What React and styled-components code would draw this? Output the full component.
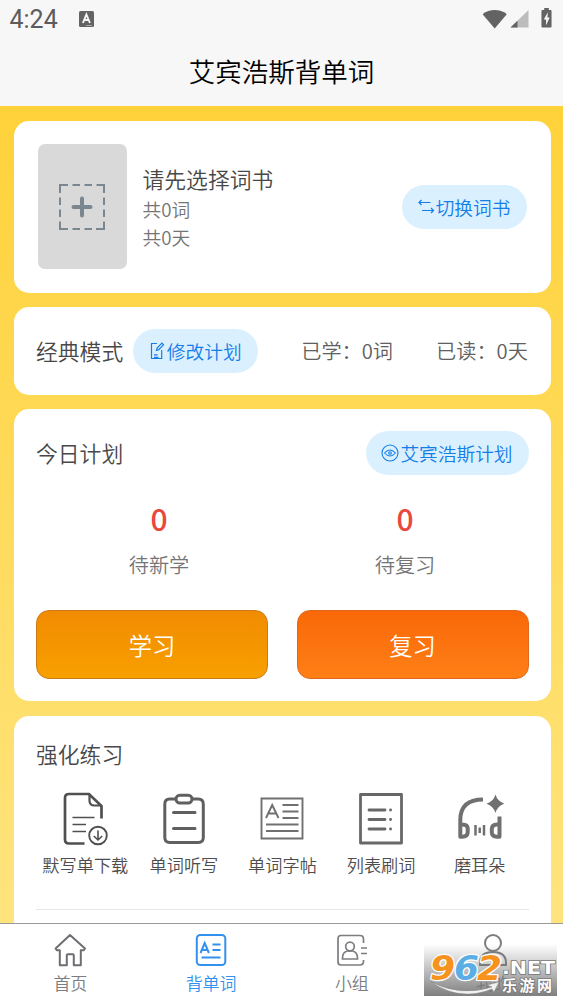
import React from "react";
import styled, { createGlobalStyle } from "styled-components";

const Global = createGlobalStyle`
  * { box-sizing: border-box; }
  body {
    margin: 0;
    font-family: "Noto Sans CJK SC", "Noto Sans", sans-serif;
    font-weight: 350;
    color: #484848;
    overflow: hidden;
  }
  svg { display: block; flex: none; }
`;

const Screen = styled.div`
  width: 563px;
  height: 1002px;
  display: flex;
  flex-direction: column;
  background: #fff;
  overflow: hidden;
`;

const Header = styled.header`
  height: 106px;
  flex: none;
  background: #f7f7f7;
`;

const StatusBar = styled.div`
  height: 38px;
  padding: 0 11px 0 9.5px;
  display: flex;
  align-items: center;
  justify-content: space-between;
`;

const StatusGroup = styled.div`
  display: flex;
  align-items: center;
  gap: ${(p) => p.$gap}px;
`;

const Clock = styled.span`
  padding-top: 2px;
  font: 400 25px/38px Roboto, sans-serif;
  color: #5c5c5c;
`;

const Title = styled.h1`
  margin: 0;
  font-size: 26.5px;
  font-weight: 350;
  line-height: 66px;
  text-align: center;
  color: #000;
`;

const Content = styled.main`
  flex: none;
  height: 817px;
  padding: 15px 12.5px 0 14px;
  display: flex;
  flex-direction: column;
  gap: 14.5px;
  overflow: hidden;
  background: linear-gradient(#ffd23a, #ffe47e);
`;

const Card = styled.section`
  flex: none;
  height: ${(p) => p.$height}px;
  padding: ${(p) => p.$padding || "22px"};
  border-radius: 15px;
  background: #fff;
`;

const Row = styled.div`
  display: flex;
  align-items: center;
  justify-content: space-between;
`;

const BookRow = styled.div`
  display: flex;
  align-items: center;
`;

const Cover = styled.div`
  width: 89.5px;
  height: 125px;
  display: flex;
  align-items: center;
  justify-content: center;
  border-radius: 7px;
  background: #d9d9d9;
`;

const BookInfo = styled.div`
  flex: 1;
  margin-left: 15.5px;
  padding-top: 1px;
`;

const Heading = styled.div`
  font-size: 21.8px;
  line-height: 32px;
  color: #484848;
`;

const Meta = styled.div`
  font-size: 18.7px;
  line-height: 28px;
  color: #757575;
`;

const Pill = styled.button`
  height: 44px;
  width: ${(p) => p.$width}px;
  padding: 0;
  display: flex;
  align-items: center;
  justify-content: center;
  gap: 1px;
  border: 0;
  border-radius: 22px;
  background: #dbf0fe;
  color: #147ee8;
  font: inherit;
  font-size: 18.7px;
  line-height: 44px;
`;

const ModeRow = styled.div`
  display: flex;
  align-items: center;
`;

const PlanSlot = styled.div`
  margin-left: 10px;
`;

const Stat = styled.span`
  margin-left: ${(p) => p.$left}px;
  font-size: 20.2px;
  line-height: 44px;
  white-space: nowrap;
  color: #606060;
`;

const Counters = styled.div`
  display: grid;
  grid-template-columns: 246px 246px;
`;

const Counter = styled.div`
  display: flex;
  flex-direction: column;
  align-items: center;
  padding: 20px 0 23px;
`;

const Count = styled.strong`
  font-size: 30px;
  font-weight: 500;
  line-height: 46px;
  margin-bottom: 2px;
  color: #e9483d;
`;

const CountLabel = styled.span`
  font-size: 20.2px;
  line-height: 44px;
  color: #757575;
`;

const Columns = styled.div`
  display: grid;
  grid-template-columns: 232px 232px;
  justify-content: space-between;
`;

const Action = styled.button`
  height: 69px;
  border: 1px solid ${(p) => p.$edge};
  border-radius: 13px;
  background: linear-gradient(${(p) => p.$from}, ${(p) => p.$to});
  color: #fff;
  font: inherit;
  font-size: 23.3px;
  padding: 0;
`;

const Tools = styled.div`
  display: grid;
  grid-template-columns: repeat(5, 98.6px);
  margin-top: 22px;
  padding-bottom: 31px;
  border-bottom: 1px solid #e6e6e6;
`;

const Tool = styled.div`
  display: flex;
  flex-direction: column;
  align-items: center;
  gap: 6.5px;
  font-size: 17.2px;
  line-height: 26px;
  white-space: nowrap;
  color: #4d4d4d;
`;

const TabBar = styled.nav`
  position: relative;
  flex: none;
  height: 79px;
  display: grid;
  grid-template-columns: repeat(4, 1fr);
  border-top: 1px solid #999;
  background: #fff;
`;

const Tab = styled.div`
  display: flex;
  flex-direction: column;
  align-items: center;
  gap: 1.500px;
  padding-top: 8px;
  font-size: 17px;
  line-height: 26px;
  color: ${(p) => (p.$active ? "#3291ee" : "#7b7d80")};
`;

const Watermark = styled.div`
  position: absolute;
  left: 424px;
  top: 20px;
  width: 133px;
  height: 52px;
  background: linear-gradient(rgba(120, 120, 120, 0) 0, rgba(120, 120, 120, 0.95) 100%);
`;

const BatterySlot = styled.div`
  margin-left: 10px;
  padding-bottom: 2px;
`;

const WifiIcon = () => (
  <svg width="26" height="20" viewBox="0 0 26 20">
    <path d="M.6 5.300C4 2.300 8.400 1 12.700 1s8.700 1.300 12.100 4.300L12.700 19.600z" fill="#636363" />
  </svg>
);

const SignalIcon = () => (
  <svg width="19" height="18" viewBox="0 0 19 18">
    <path d="M18.500 0v17.500H.5z" fill="#bdbdbd" />
    <path d="M7.500 10.700v6.800h-7z" fill="#636363" />
  </svg>
);

const BatteryIcon = () => (
  <svg width="11" height="20" viewBox="0 0 12 21" preserveAspectRatio="none">
    <path d="M3.500 0h5v2h2q1 0 1 1v16.500q0 1-1 1h-9q-1 0-1-1V3q0-1 1-1h2z" fill="#636363" />
    <path d="M7.500 4.500 3 12h2.500v6L9.500 10H7z" fill="#f7f7f7" />
  </svg>
);

const InputIcon = () => (
  <svg width="15" height="16" viewBox="0 0 15 16">
    <rect width="15" height="16" rx="1.500" fill="#636363" />
    <path d="m3.900 12 3.500-8.500L10.900 12M5.300 9h4.200" fill="none" stroke="#f7f7f7" strokeWidth="1.900" />
    <path d="M7.500 14.500h1m1 0h1m1 0h1" stroke="#f7f7f7" />
  </svg>
);

const AddIcon = () => (
  <svg width="46" height="46" viewBox="0 0 46 46" fill="none" stroke="#7b8790">
    <path
      strokeWidth="2"
      d="M1 9V1h8M13.500 1h7.500M25.500 1H33M37.500 1H45v8M45 13.500V21M45 25.500V33M45 37.500V45h-8M33 45h-7.500M21 45h-7.500M9 45H1v-7.500M1 33v-7.500M1 21v-7.500"
    />
    <path strokeWidth="4" strokeLinecap="round" d="M23 14.500v17M14.500 23h17" />
  </svg>
);

const SwapIcon = () => (
  <svg width="17" height="16" viewBox="0 0 17 16" fill="none" stroke="#147ee8" strokeWidth="1.200">
    <path d="M12.500 3.500H1M3.500 1 1 3.500 3.500 6M4 11.500h11.500M13 9l2.500 2.500L13 14" />
  </svg>
);

const EditIcon = () => (
  <svg width="16" height="18" viewBox="0 0 16 18" fill="none" stroke="#147ee8" strokeWidth="1.200">
    <path d="M7 1.500H1.500v15h10.200V8M4 12.800h3.600M4 15.300h4.500M6.500 8.300l.6-2.300 4.800-4.800 1.600 1.600-4.800 4.800z" />
  </svg>
);

const EyeIcon = () => (
  <svg width="18" height="18" viewBox="0 0 18 18" fill="none" stroke="#147ee8" strokeWidth="1.100">
    <circle cx="9" cy="9" r="8" />
    <path d="M3.500 9q5.500-6 11 0-5.500 6-11 0z" />
    <circle cx="9" cy="9" r="1.300" />
  </svg>
);

const DownloadIcon = () => (
  <svg width="46" height="54" viewBox="0 0 46 54" fill="none" stroke="#505050">
    <path strokeWidth="2.700" d="M22.500 51.500H7q-4 0-4-4V6q0-4 4-4h20l12.500 12v12.500" />
    <path strokeWidth="2.200" d="M27.500 2v6.500q0 5 5 5h7" />
    <path strokeWidth="1.700" d="M10.500 25.500h22M10.500 32.500h13.500M10.500 39.500h13.500" />
    <circle cx="36" cy="43.500" r="8.800" strokeWidth="1.900" />
    <path strokeWidth="1.600" d="M36 38.500v9M31.800 44l4.200 4 4.200-4" />
  </svg>
);

const ClipboardIcon = () => (
  <svg width="44" height="54" viewBox="0 0 44 54" fill="none" stroke="#606060" strokeWidth="3">
    <path d="M13.500 7H7.500Q2.800 7 2.800 12v33.500q0 5 5 5h28.500q5 0 5-5V12q0-5-5-5H30" />
    <rect x="14" y="3.200" width="16" height="7.800" rx="3.800" />
    <path strokeLinecap="round" d="M11.500 20.500H33M11.500 36.500H33" />
  </svg>
);

const CopybookIcon = () => (
  <svg width="44" height="54" viewBox="0 0 44 54" fill="none" stroke="#707070" strokeWidth="1.900">
    <path d="M1.500 6.500h41v40h-41zM6 26l6.200-13L18.500 26M8.500 21.500h7.500M22.500 13h16M22.500 19.500h16M22.500 26h16M6 32.500h32.500M6 39h32.500" />
  </svg>
);

const ListIcon = () => (
  <svg width="44" height="54" viewBox="0 0 44 54" fill="none" stroke="#686868" strokeWidth="2.800">
    <path strokeLinejoin="round" d="M1.500 2.500h41v48.500h-41z" />
    <path strokeLinecap="round" d="M10 18h16M10 27.500h16M10 37h16M31.500 18h.1M31.500 27.500h.1M31.500 37h.1" />
  </svg>
);

const HeadphoneIcon = () => (
  <svg width="48" height="54" viewBox="0 0 48 54" fill="none" stroke="#707070" strokeWidth="4" strokeLinejoin="round">
    <path d="M4.300 44V28Q4.300 7.500 27 7.500M4.300 32.500h2q5.400 0 5.400 4v3.500q0 4.700-5.400 4.700h-2zM43.500 24.500v20.200h-2.500q-5.200 0-5.200-4.700v-3q0-4.500 5.200-4.500h2.500" />
    <path strokeWidth="2.500" strokeLinejoin="miter" d="M19.500 33v10.500M23.700 35.500v5.500M28 33v10.500" />
    <path fill="#707070" stroke="none" d="M39.500 2.500q2 7 9 9.200-7 2.300-9 9.300-2-7-9-9.300 7-2.200 9-9.200z" />
  </svg>
);

const HomeIcon = () => (
  <svg width="34" height="36" viewBox="0 0 34 36" fill="none" stroke="#6c6e71" strokeWidth="2" strokeLinejoin="round">
    <path d="M17 3 32 16.500l-1.200 1.700h-3v15h-7v-10q0-1-1-1h-5q-1 0-1 1v10h-7v-15h-3l-1.200-1.700z" />
  </svg>
);

const WordsIcon = () => (
  <svg width="34" height="36" viewBox="0 0 34 36" fill="none" stroke="#3291ee" strokeWidth="2">
    <rect x="2.800" y="3" width="28.500" height="30" rx="3.500" />
    <path d="m6.500 21 4.200-10 4.200 10M8 18h5.500M18.500 12.500h8M18.500 18h8M7.500 25.500H26.500" />
  </svg>
);

const GroupIcon = () => (
  <svg width="34" height="36" viewBox="0 0 34 36" fill="none" stroke="#7b7d80" strokeWidth="1.700">
    <path d="M28.500 11V7q0-3.500-3.500-3.500H6q-3 0-3 3V30q0 3 3 3h19q3.500 0 3.500-4v-1M26 16h6M26 21.500h6" />
    <circle cx="15" cy="14.500" r="4.300" />
    <path d="M7.500 27v-1q0-6 5-7h5q5 1 5 7v1z" />
  </svg>
);

const ProfileIcon = () => (
  <svg width="34" height="36" viewBox="0 0 34 36" fill="none" stroke="#7b7d80" strokeWidth="2">
    <circle cx="17" cy="11" r="8" />
    <path d="M4 33v-2q0-11 13-11t13 11v2z" />
  </svg>
);

const SiteLogo = () => (
  <svg width="133" height="52" viewBox="0 0 133 52">
    <g fontFamily="DejaVu Sans, sans-serif" fontWeight="700" fontStyle="italic" fontSize="33" stroke="#fff" strokeWidth="2.500" paintOrder="stroke" strokeLinejoin="round">
      <text x="6" y="36" textLength="25" lengthAdjust="spacingAndGlyphs" fill="#f6921e">9</text>
      <text x="30" y="36" textLength="25" lengthAdjust="spacingAndGlyphs" fill="#5aaee3">6</text>
      <text x="53" y="36" textLength="25" lengthAdjust="spacingAndGlyphs" fill="#f6921e">2</text>
    </g>
    <path d="M7 38q30 15 61 5l-5-2 12-3-5 10-2-3Q36 58 7 38z" fill="#f1f1f1" stroke="#888" strokeWidth=".5" />
    <g fill="#fff" stroke="#777" strokeWidth="1.500" paintOrder="stroke" fontWeight="700">
      <text x="78" y="30" fontFamily="DejaVu Sans, sans-serif" fontSize="18" textLength="53" lengthAdjust="spacingAndGlyphs">.NET</text>
      <text x="78" y="47" fontFamily="Noto Sans CJK SC, sans-serif" fontSize="15" textLength="50">乐游网</text>
    </g>
  </svg>
);

const tools = [
  ["默写单下载", DownloadIcon],
  ["单词听写", ClipboardIcon],
  ["单词字帖", CopybookIcon],
  ["列表刷词", ListIcon],
  ["磨耳朵", HeadphoneIcon],
];

const tabs = [
  ["首页", HomeIcon],
  ["背单词", WordsIcon],
  ["小组", GroupIcon],
  ["我的", ProfileIcon],
];

export default function App() {
  return (
    <Screen>
      <Global />
      <Header>
        <StatusBar>
          <StatusGroup $gap={21}>
            <Clock>4:24</Clock>
            <InputIcon />
          </StatusGroup>
          <StatusGroup $gap={2}>
            <WifiIcon />
            <SignalIcon />
            <BatterySlot>
              <BatteryIcon />
            </BatterySlot>
          </StatusGroup>
        </StatusBar>
        <Title>艾宾浩斯背单词</Title>
      </Header>

      <Content>
        <Card $height={171.5} $padding="23px 24px 0 23.5px">
          <BookRow>
            <Cover>
              <AddIcon />
            </Cover>
            <BookInfo>
              <Heading>请先选择词书</Heading>
              <Meta>共0词</Meta>
              <Meta>共0天</Meta>
            </BookInfo>
            <Pill $width={125}>
              <SwapIcon />
              切换词书
            </Pill>
          </BookRow>
        </Card>

        <Card $height={87.5}>
          <ModeRow>
            <Heading>经典模式</Heading>
            <PlanSlot>
              <Pill $width={125}>
                <EditIcon />
                修改计划
              </Pill>
            </PlanSlot>
            <Stat $left={43}>已学：0词</Stat>
            <Stat $left={43}>已读：0天</Stat>
          </ModeRow>
        </Card>

        <Card $height={292}>
          <Row>
            <Heading>今日计划</Heading>
            <Pill $width={163}>
              <EyeIcon />
              艾宾浩斯计划
            </Pill>
          </Row>
          <Counters>
            <Counter>
              <Count>0</Count>
              <CountLabel>待新学</CountLabel>
            </Counter>
            <Counter>
              <Count>0</Count>
              <CountLabel>待复习</CountLabel>
            </Counter>
          </Counters>
          <Columns>
            <Action $from="#f18b00" $to="#f8a000" $edge="#c77b16">学习</Action>
            <Action $from="#f96808" $to="#ff7f16" $edge="#df681a">复习</Action>
          </Columns>
        </Card>

        <Card $height={260}>
          <Heading>强化练习</Heading>
          <Tools>
            {tools.map(([label, Icon]) => (
              <Tool key={label}>
                <Icon />
                {label}
              </Tool>
            ))}
          </Tools>
        </Card>
      </Content>

      <TabBar>
        {tabs.map(([label, Icon], i) => (
          <Tab key={label} $active={i === 1}>
            <Icon />
            {label}
          </Tab>
        ))}
        <Watermark>
          <SiteLogo />
        </Watermark>
      </TabBar>
    </Screen>
  );
}
